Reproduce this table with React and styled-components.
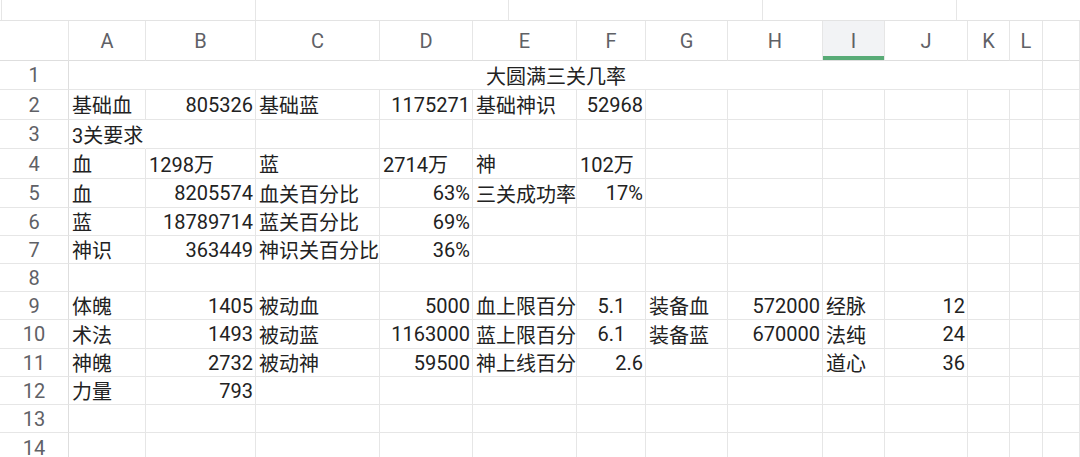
import styled, { createGlobalStyle } from "styled-components";

const GlobalStyle = createGlobalStyle`
  html, body {
    margin: 0;
    padding: 0;
    background: #fff;
    overflow: hidden;
  }
  body {
    font-family: Roboto, "Noto Sans CJK SC", sans-serif;
  }
`;

// column widths: row header, A..L, then the rest of the screen
const COLS = [69, 77, 110, 124, 93, 104, 69, 82, 95, 62, 83, 42, 33];
const LETTERS = ["A", "B", "C", "D", "E", "F", "G", "H", "I", "J", "K", "L"];
const ROW_H = [29, 30, 29, 30, 29, 28, 28, 28, 28, 29, 28, 28, 28, 30];
const SELECTED_COL = 8; // I

// each row: [colIndex (0 = A), text, align, spill]
const ROWS = [
  [],
  [
    [0, "基础血", "l"],
    [1, "805326", "r"],
    [2, "基础蓝", "l"],
    [3, "1175271", "r"],
    [4, "基础神识", "l"],
    [5, "52968", "r"],
  ],
  [[0, "3关要求", "l", true]],
  [
    [0, "血", "l"],
    [1, "1298万", "l"],
    [2, "蓝", "l"],
    [3, "2714万", "l"],
    [4, "神", "l"],
    [5, "102万", "l"],
  ],
  [
    [0, "血", "l"],
    [1, "8205574", "r"],
    [2, "血关百分比", "l"],
    [3, "63%", "r"],
    [4, "三关成功率", "l"],
    [5, "17%", "r"],
  ],
  [
    [0, "蓝", "l"],
    [1, "18789714", "r"],
    [2, "蓝关百分比", "l"],
    [3, "69%", "r"],
  ],
  [
    [0, "神识", "l"],
    [1, "363449", "r"],
    [2, "神识关百分比", "l"],
    [3, "36%", "r"],
  ],
  [],
  [
    [0, "体魄", "l"],
    [1, "1405", "r"],
    [2, "被动血", "l"],
    [3, "5000", "r"],
    [4, "血上限百分", "l"],
    [5, "5.1", "c"],
    [6, "装备血", "l"],
    [7, "572000", "r"],
    [8, "经脉", "l"],
    [9, "12", "r"],
  ],
  [
    [0, "术法", "l"],
    [1, "1493", "r"],
    [2, "被动蓝", "l"],
    [3, "1163000", "r"],
    [4, "蓝上限百分", "l"],
    [5, "6.1", "c"],
    [6, "装备蓝", "l"],
    [7, "670000", "r"],
    [8, "法纯", "l"],
    [9, "24", "r"],
  ],
  [
    [0, "神魄", "l"],
    [1, "2732", "r"],
    [2, "被动神", "l"],
    [3, "59500", "r"],
    [4, "神上线百分", "l"],
    [5, "2.6", "r"],
    [8, "道心", "l"],
    [9, "36", "r"],
  ],
  [
    [0, "力量", "l"],
    [1, "793", "r"],
  ],
  [],
  [],
];

const Screen = styled.div`
  width: 1080px;
  height: 457px;
  overflow: hidden;
  background: #fff;
  display: flex;
  flex-direction: column;
`;

const TopBar = styled.div`
  display: flex;
  height: 21px;
  flex-shrink: 0;
  padding-left: 1px;
  box-sizing: border-box;
  border-bottom: 1px solid #e3e3e3;
`;

const TopCell = styled.div`
  width: ${(p) => (p.$w ? `${p.$w}px` : "auto")};
  flex: ${(p) => (p.$w ? "none" : "1")};
  border-left: ${(p) => (p.$first ? "1px solid #e6e6e6" : "none")};
  border-right: ${(p) => (p.$last ? "none" : "1px solid #e6e6e6")};
  box-sizing: border-box;
`;

const Sheet = styled.div`
  display: grid;
  grid-template-columns: ${COLS.map((w) => `${w}px`).join(" ")} 1fr;
  grid-template-rows: 40px ${ROW_H.map((h) => `${h}px`).join(" ")};
`;

const Cell = styled.div`
  box-sizing: border-box;
  display: flex;
  align-items: center;
  white-space: nowrap;
  border-right: 1px solid #e6e6e6;
  border-bottom: 1px solid #e6e6e6;
  min-width: 0;
`;

const HeadCell = styled(Cell)`
  justify-content: center;
  font-size: 20px;
  color: #5f6166;
  border-bottom-color: #dedede;
  background: ${(p) => (p.$selected ? "#f2f3f5" : "transparent")};
  box-shadow: ${(p) => (p.$selected ? "inset 0 -4px 0 #58ab76" : "none")};
`;

const RowNum = styled(Cell)`
  justify-content: center;
  font-size: 20px;
  color: #5f6166;
  border-right-color: #dedede;
`;

const DataCell = styled(Cell)`
  padding: 0 2px 0 3px;
  font-size: 20px;
  color: #222;
  overflow: visible;
  justify-content: ${(p) =>
    p.$align === "r" ? "flex-end" : p.$align === "c" ? "center" : "flex-start"};
  border-right-color: ${(p) => (p.$spill ? "transparent" : "#e6e6e6")};
`;

const TitleCell = styled(DataCell)`
  grid-column: 2 / span 12;
  justify-content: center;
`;

function renderRow(cells, r) {
  const out = [
    <RowNum key={`n${r}`}>{r + 1}</RowNum>,
  ];
  if (r === 0) {
    out.push(<TitleCell key="title">大圆满三关几率</TitleCell>);
    out.push(<DataCell key="t-rest" />);
    return out;
  }
  for (let c = 0; c <= LETTERS.length; c++) {
    const found = cells.find((x) => x[0] === c);
    out.push(
      <DataCell
        key={`${r}-${c}`}
        $align={found ? found[2] : "l"}
        $spill={found ? found[3] : false}
      >
        {found ? found[1] : ""}
      </DataCell>
    );
  }
  return out;
}

export default function App() {
  return (
    <>
      <GlobalStyle />
      <Screen>
        <TopBar>
          <TopCell $first $w={255} />
          <TopCell $w={253} />
          <TopCell $w={254} />
          <TopCell $w={194} />
          <TopCell $last />
        </TopBar>
        <Sheet>
          <HeadCell />
          {LETTERS.map((l, i) => (
            <HeadCell key={l} $selected={i === SELECTED_COL}>
              {l}
            </HeadCell>
          ))}
          <HeadCell />
          {ROWS.map((cells, r) => renderRow(cells, r))}
        </Sheet>
      </Screen>
    </>
  );
}
